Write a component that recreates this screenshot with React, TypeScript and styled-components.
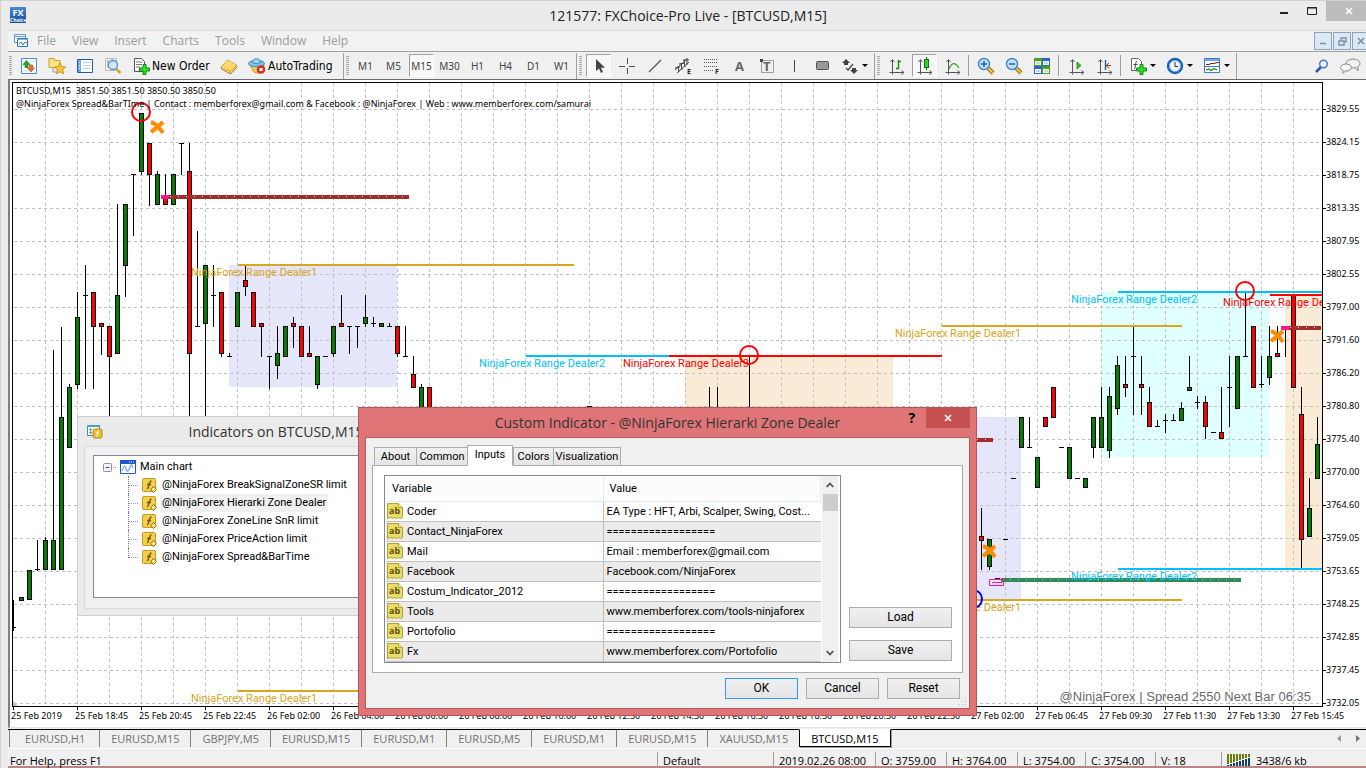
import React from "react";
import styled, { createGlobalStyle, css } from "styled-components";

const ui = `"Open Sans", "Noto Sans", sans-serif`;
const small = `"Noto Sans", "Open Sans", sans-serif`;
const dialogFont = `Roboto, "Open Sans", sans-serif`;

const Global = createGlobalStyle`
  * { box-sizing: border-box; }
  body { margin: 0; background: #ebebeb; color: #000; font: 11px ${ui}; }
  button { font: inherit; color: inherit; padding: 0; margin: 0; border: 0; background: none; }
  svg { display: block; flex: none; }
`;

/* ---------- terminal frame ---------- */
const Desktop = styled.div`
  position: relative;
  min-height: 100vh;
  display: flex;
  flex-direction: column;
  overflow: hidden;
  border-top: 1px solid #d2d2d2;
  border-left: 1px solid #d2d2d2;
`;
const TitleBar = styled.header`
  display: flex;
  height: 29px;
  padding-left: 9px;
  justify-content: space-between;
`;
const AppTitle = styled.h1`
  margin: 0;
  font: 14px/30px ${ui};
  color: #222;
`;
const AppLogo = styled.span`
  width: 16px;
  height: 16px;
  margin-top: 6px;
  background: linear-gradient(#4a8ad4, #0d4a9c);
  color: #fff;
  font: bold 9px/11px ${ui};
  text-align: center;
  small { display: block; font-size: 5px; line-height: 4px; }
`;
const TitleSide = styled.div<{ $end?: boolean }>`
  flex: 1;
  display: flex;
  justify-content: ${p => (p.$end ? "flex-end" : "flex-start")};
  align-items: flex-start;
`;
const CaptionButton = styled.button<{ $close?: boolean }>`
  width: ${p => (p.$close ? 45 : 28)}px;
  height: 20px;
  margin-right: ${p => (p.$close ? -5 : 0)}px;
  background: ${p => (p.$close ? "#bcbcbc" : "none")};
  display: grid;
  place-items: center;
`;
const Frame = styled.main`
  flex: 1;
  margin-left: 7px;
  display: flex;
  flex-direction: column;
  border-top: 1px solid #dadada;
  background: #f0f0f0;
`;
const MenuBar = styled.nav`
  display: flex;
  align-items: center;
  height: 20px;
  padding-left: 5px;
  background: #f2f2f2;
  color: #9b9b9b;
  font: 12px ${ui};
`;
const MenuItem = styled.button`
  padding: 0 8px;
  line-height: 20px;
`;
const MdiButtons = styled.div`
  display: flex;
  gap: 1px;
  margin-left: auto;
  margin-right: -4px;
`;
const MdiButton = styled.button`
  width: 18px;
  height: 18px;
  border: 1px solid #8fa3b8;
  background: #dce8f5;
  display: grid;
  place-items: center;
`;

/* ---------- tool bar ---------- */
const ToolBar = styled.div`
  display: flex;
  align-items: center;
  height: 28px;
  padding: 0 3px 0 1px;
  border-top: 1px solid #a0a0a0;
  background: #f0f0f0;
`;
const Grip = styled.span`
  width: 3px;
  height: 20px;
  margin-right: 2px;
  background: repeating-linear-gradient(#a8a8a8 0 1px, #f0f0f0 1px 2px);
`;
const Divider = styled.span<{ $l?: number; $r?: number }>`
  width: 1px;
  height: ${p => (p.$l === undefined ? 26 : 21)}px;
  margin: 0 ${p => p.$r ?? 2}px 0 ${p => p.$l ?? 1}px;
  background: #a0a0a0;
`;
const Tool = styled.button<{ $pressed?: boolean; $drop?: boolean }>`
  width: ${p => (p.$drop ? 34 : 25)}px;
  height: 23px;
  margin: 0 1px 0 2px;
  padding-left: ${p => (p.$drop ? 3 : 0)}px;
  display: flex;
  align-items: center;
  justify-content: ${p => (p.$drop ? "flex-start" : "center")};
  gap: 3px;
  font: 10px ${small};
  color: #444;
  ${p =>
    p.$pressed &&
    css`
      border: 1px solid;
      border-color: #a0a0a0 #fff #fff #a0a0a0;
      background: #f8f8f8;
    `}
`;
const TextTool = styled.button<{ $w: number }>`
  width: ${p => p.$w}px;
  height: 23px;
  padding-left: 6px;
  display: flex;
  align-items: center;
  gap: 2px;
  font: 12px "DejaVu Sans Condensed", "DejaVu Sans", sans-serif;
`;
const Caret = styled.span`
  border: 3px solid transparent;
  border-top-color: #000;
  border-bottom: 0;
`;
const Spacer = styled.span`
  flex: 1;
`;

/* ---------- chart ---------- */
const Workspace = styled.section`
  flex: 1;
  display: flex;
  flex-direction: column;
  padding: 2px 0 0 2px;
  border-top: 1px solid #696969;
  border-left: 2px solid #808080;
  border-bottom: 1px solid #e3e3e3;
  background: #fff;
`;
const ChartRow = styled.div`
  display: flex;
`;
const Plot = styled.div`
  flex: 1;
  min-width: 0;
  border: 1px solid #000;
`;
const PriceAxis = styled.ol`
  width: 43px;
  margin: 0;
  padding: 22px 0 0;
  list-style: none;
  font: 9px/10px ${small};
`;
const Price = styled.li`
  height: 33px;
  display: flex;
  align-items: flex-start;
  &:last-child { height: 9px; }
  &::before {
    content: "";
    width: 3px;
    height: 1px;
    margin-top: 5px;
    background: #000;
  }
`;
const DateAxis = styled.ol`
  margin: 0 0 0 -1px;
  padding: 0 0 5px;
  list-style: none;
  display: flex;
  font: 9px/12px ${small};
  white-space: nowrap;
  overflow: hidden;
`;
const DateMark = styled.li`
  flex: 0 0 64px;
  &::before {
    content: "";
    display: block;
    width: 1px;
    height: 3px;
    margin-left: 2px;
    background: #000;
  }
`;
const ChartTabs = styled.nav`
  display: flex;
  align-items: flex-start;
  height: 20px;
  padding-left: 1px;
  border-top: 1px solid #000;
  border-bottom: 1px solid #fff;
  margin-top: 1px;
`;
const ChartTab = styled.button<{ $active?: boolean }>`
  height: 17px;
  padding: 0 11px;
  border-left: 1px solid #808080;
  line-height: 17px;
  color: #707070;
  &:first-child { padding-left: 15px; padding-right: 14px; }
  ${p =>
    p.$active &&
    css`
      height: 18px;
      margin-top: -1px;
      background: #fff;
      color: #000;
      border: 1px solid #000;
      border-top-color: #fff;
      box-shadow: 1px 1px #a0a0a0;
    `}
`;
const TabScroll = styled.span`
  display: flex;
  gap: 15px;
  margin: 5px 6px 0 auto;
`;
const StatusBar = styled.footer`
  display: flex;
  height: 19px;
  padding: 3px 0 0 2px;
  border-bottom: 2px solid #b98686;
  font: 11px/17px ${ui};
  white-space: nowrap;
`;
const StatusCell = styled.span<{ $w?: number }>`
  flex: ${p => (p.$w ? `0 0 ${p.$w}px` : "1")};
  height: 14px;
  display: flex;
  gap: 5px;
  padding-left: ${p => (p.$w ? 5 : 0)}px;
  border-left: ${p => (p.$w ? "1px solid #a0a0a0" : "0")};
  svg { margin-top: 2px; }
`;

/* ---------- floating windows ---------- */
const ListWindow = styled.section`
  position: absolute;
  left: 76px;
  top: 415px;
  width: 404px;
  padding: 0 6px 6px;
  border: 1px solid #cfcfcf;
  background: #ebebeb;
`;
const WindowTitle = styled.h2`
  margin: 0;
  font: 14px/30px ${ui};
  color: #333;
  text-align: center;
`;
const ListCaption = styled.div`
  display: grid;
  grid-template-columns: 18px 1fr 26px;
  align-items: center;
  height: 29px;
  padding-left: 2px;
`;
const ListClient = styled.div`
  padding: 8px 8px 10px;
  border: 1px solid #dadada;
  background: #f0f0f0;
`;
const Tree = styled.div`
  height: 143px;
  padding: 2px 0 0 9px;
  border: 1px solid #828790;
  background: #fff;
  font: 11px/18px ${dialogFont};
`;
const TreeRoot = styled.div`
  display: flex;
  align-items: center;
  height: 18px;
  gap: 4px;
`;
const TreeList = styled.ul`
  margin: 0 0 0 25px;
  padding: 0;
  list-style: none;
`;
const TreeItem = styled.li<{ $selected?: boolean }>`
  display: flex;
  align-items: center;
  height: 18px;
  gap: 3px;
  &::before {
    content: "";
    width: 10px;
    height: 18px;
    border-left: 1px dotted #808080;
    background: repeating-linear-gradient(90deg, #999 0 1px, #fff 1px 2px) 0 9px / 100% 1px no-repeat;
  }
  &:last-child::before { height: 10px; align-self: flex-start; }
  span {
    padding: 0 2px;
    background: ${p => (p.$selected ? "#f0f0f0" : "none")};
  }
`;

const Dialog = styled.section`
  position: absolute;
  left: 357px;
  top: 406px;
  width: 619px;
  padding: 0 6px 6px;
  border: 1px solid #b35659;
  background: #df7577;
  font: 11px ${dialogFont};
`;
const DialogCaption = styled.div`
  display: grid;
  grid-template-columns: 72px 1fr 72px;
  height: 29px;
`;
const CaptionTools = styled.div`
  display: flex;
  justify-content: flex-end;
  align-items: flex-start;
`;
const HelpButton = styled.button`
  width: 28px;
  font: bold 14px/20px ${ui};
`;
const CloseButton = styled.button`
  width: 45px;
  height: 20px;
  background: #c75050;
  display: grid;
  place-items: center;
`;
const DialogClient = styled.div`
  padding: 7px 6px 9px;
  border: 1px solid #b85a5c;
  background: #f0f0f0;
`;
const TabStrip = styled.div`
  display: flex;
  align-items: flex-end;
  padding-left: 2px;
  margin-bottom: -1px;
`;
const DialogTab = styled.button<{ $active?: boolean; $w: number }>`
  width: ${p => p.$w}px;
  height: ${p => (p.$active ? 21 : 19)}px;
  margin-right: ${p => (p.$active ? 0 : -1)}px;
  border: 1px solid #acacac;
  background: linear-gradient(#f0f0f0, #e5e5e5);
  ${p =>
    p.$active &&
    css`
      position: relative;
      background: #fff;
      border-bottom-color: #fff;
      padding-bottom: 2px;
    `}
`;
const TabPage = styled.div`
  display: flex;
  gap: 8px;
  padding: 9px 10px 9px 11px;
  border: 1px solid #acacac;
  background: #fff;
`;
const GridBox = styled.div`
  flex: 1;
  display: flex;
  padding: 0 2px 0 1px;
  border: 1px solid #828790;
`;
const InputsTable = styled.table`
  flex: 1;
  border-collapse: collapse;
  table-layout: fixed;
  th {
    height: 25px;
    padding: 0 6px;
    text-align: left;
    font-weight: normal;
    background: #fcfcfc;
    border-right: 1px solid #e0edfa;
    border-bottom: 1px solid #e0edfa;
  }
  td {
    height: 20px;
    padding: 0 3px;
    border-right: 1px solid #c0c0c0;
    border-bottom: 1px solid #c0c0c0;
    white-space: nowrap;
  }
  td:last-child { border-right: 0; }
  tr:nth-child(even) td { background: #ebebeb; }
`;
const NameCell = styled.span`
  display: flex;
  align-items: center;
  gap: 4px;
  margin-left: -2px;
`;
const ScrollBar = styled.div`
  width: 16px;
  display: flex;
  flex-direction: column;
  align-items: center;
  margin-left: 1px;
  background: #f0f0f0;
`;
const ScrollButton = styled.button`
  width: 15px;
  height: 18px;
  display: grid;
  place-items: center;
`;
const Thumb = styled.span`
  width: 15px;
  height: 17px;
  margin-bottom: auto;
  background: #cdcdcd;
`;
const SideButtons = styled.div`
  width: 103px;
  display: flex;
  flex-direction: column;
  justify-content: flex-end;
  gap: 12px;
  padding-bottom: 2px;
`;
const PushButton = styled.button<{ $default?: boolean }>`
  height: 21px;
  border: 1px solid ${p => (p.$default ? "#3399ff" : "#acacac")};
  background: linear-gradient(#f0f0f0, #e5e5e5);
  font-size: 12px;
`;
const DialogFooter = styled.div`
  display: flex;
  justify-content: flex-end;
  gap: 8px;
  padding: 5px 3px 0 0;
  ${PushButton} { width: 73px; }
`;
const SizeGrip = styled.span`
  position: absolute;
  right: 9px;
  bottom: 9px;
  width: 9px;
  height: 9px;
  background: radial-gradient(#bbb 1px, transparent 1px) 0 0 / 3px 3px;
  clip-path: polygon(100% 0, 100% 100%, 0 100%);
`;

/* ---------- icons ---------- */
const Ico = ({ children, w = 18, h = 18 }: { children: React.ReactNode; w?: number; h?: number }) => (
  <svg width={w} height={h} viewBox={`0 0 ${w} ${h}`} aria-hidden="true">{children}</svg>
);
const Plus = () => <path d="M8.500 11h3.500v-3.500h3v3.500h3.500v3h-3.500v3.500h-3v-3.500h-3.500z" transform="translate(-1 0)" fill="#2fe02f" stroke="#0a8a0a" />;
const MenuIcon = () => (
  <Ico w={16} h={16}>
    <path d="M1.500 1.500h11v8h-11zM1.500 3.500h11" fill="#fff" stroke="#5b9bdc" />
    <path d="M4.500 5.500h10v8h-10z" fill="#fff" stroke="#2f6fc4" /><path d="M4.500 6.500h10" stroke="#7db3ea" />
    <path d="M6 11l2-2 2 3 2-3 2 1" fill="none" stroke="#3a78c8" />
  </Ico>
);
const MarketIcon = () => (
  <Ico><path d="M1.500 1.500h15v15h-15z" fill="#f6fbff" stroke="#4a90d9" />
    <path d="M3 5h2M11 4.500h4M3 8h1M3 14h5" stroke="#cdd9e6" />
    <path d="M6.500 3.500l3.500 4h-2v3h-3v-3h-2z" fill="#22b022" stroke="#0c7a0c" strokeWidth=".6" />
    <path d="M11 15l3.500-4h-2v-3h-3v3h-2z" fill="#f07030" stroke="#b03c10" strokeWidth=".6" /></Ico>
);
const FavIcon = () => (
  <Ico w={20}><path d="M2 1.500h5l1 2h5v7h-11z" fill="#fbe38a" stroke="#c9a227" /><path d="M6 11v4h3" fill="none" stroke="#999" />
    <path d="M13 6l1.700 3.600 4 .5-3 2.700.8 4-3.500-2-3.500 2 .8-4-3-2.700 4-.5z" fill="#f7c93a" stroke="#b8860b" strokeWidth=".8" /></Ico>
);
const NavIcon = () => (
  <Ico><path d="M1.500 2.500h15v13h-15z" fill="#fff" stroke="#1e5cae" /><path d="M2 3h3v12h-3z" fill="#6fa8e6" />
    <path d="M7 5.500h8M7 8.500h8M7 11.500h8" stroke="#b8d0ea" /><path d="M3 5.500h1M3 8.500h1M3 11.500h1" stroke="#fff" /></Ico>
);
const TesterIcon = () => (
  <Ico><path d="M1.500 1.500h11v12h-11z" fill="#f4f6f8" stroke="#b5bcc4" /><path d="M4 3v8M8 2v6M11 3v4" stroke="#77879a" />
    <circle cx="9" cy="8" r="4.500" fill="#cfe5f7" fillOpacity=".85" stroke="#5f92c4" strokeWidth="1.300" /><path d="M12.500 12l4 4" stroke="#d9a520" strokeWidth="2.500" /></Ico>
);
const OrderIcon = () => (
  <Ico><path d="M2.500 1.500h7l3 3v10h-10z" fill="#fff" stroke="#555" /><path d="M4 5h6M4 7.500h6M4 10h4" stroke="#777" /><Plus /></Ico>
);
const GoldIcon = () => (
  <Ico><path d="M1.500 10l6-7 9 5v3l-6 6-9-5z" fill="#d9981c" stroke="#a36f0c" strokeWidth=".8" /><path d="M1.500 10l6-7 9 5-6 6z" fill="#ffd968" /><path d="M2 11l8.500 4.500 6-6" fill="none" stroke="#ffe9a8" /></Ico>
);
const AutoIcon = () => (
  <Ico><path d="M2 8l4 7c4 2 7 1 9-1l1-6z" fill="#f6cf54" stroke="#c09020" /><ellipse cx="8.500" cy="6.500" rx="8" ry="3.200" fill="#7cc3ea" stroke="#3a86bb" />
    <path d="M4.500 5.500c0-5 8-5 8 0-2 1.500-6 1.500-8 0z" fill="#9fd6f4" stroke="#3a86bb" /><circle cx="13" cy="12.500" r="4.300" fill="#dd2f20" /><path d="M11.500 11h3v3h-3z" fill="#fff" /></Ico>
);
const CursorIcon = () => <Ico><path d="M6 2v12l3-2.500 2 4.500 2-1-2-4.300h4z" fill="#444" /></Ico>;
const CrossIcon = () => <Ico><path d="M9.500 1v6M9.500 11v6M1 9.500h6M11 9.500h6" stroke="#505050" /></Ico>;
const LineIcon = () => <Ico><path d="M3 15L15 3" stroke="#555" strokeWidth="1.300" /></Ico>;
const Letter = styled.text`
  font: bold 7px ${ui};
  fill: #222;
`;
const BigLetter = styled.text`
  font: bold 13px ${ui};
  fill: #666;
`;
const ChannelIcon = () => (
  <Ico><path d="M1 13L13 2M3 16L15 5M4 9l1 6M7 6l1 7M10 3l1 7M13 1v7M1 11l5-1M5 7l6-1M9 3l6 0" stroke="#444" fill="none" /><Letter x="13" y="17">E</Letter></Ico>
);
const FiboIcon = () => (
  <Ico><path d="M2 2.500h14M2 5.500h14M2 9.500h14M2 13.500h9" stroke="#555" strokeDasharray="1 1" /><Letter x="13" y="17">F</Letter></Ico>
);
const TextIcon = () => <Ico><BigLetter x="5" y="14">A</BigLetter></Ico>;
const LabelIcon = () => (
  <Ico><path d="M3.500 3.500h12v12h-12z" fill="none" stroke="#555" strokeDasharray="1 1" /><path d="M2 2h3v3h-3z" fill="#444" /><BigLetter x="5" y="14">T</BigLetter></Ico>
);
const VLineIcon = () => <Ico><path d="M8.500 3v12" stroke="#444" /></Ico>;
const RectIcon = () => <Ico><rect x="2.500" y="4.500" width="12" height="8" rx="1" fill="#999" stroke="#555" /></Ico>;
const ArrowsIcon = () => (
  <Ico><path d="M1 6l4-4 4 4h-2v2h-4v-2zM9 13h2v-2h4v2h2l-4 4z" fill="#444" /><path d="M5 11l2 2 5-6" fill="none" stroke="#444" strokeWidth="1.200" /></Ico>
);
const Axes = () => <path d="M4.500 3v12.500h11M2.500 5l2-2.500 2 2.500M13.500 13.500l2.500 2-2.500 2M1.500 15.500h3v2" fill="none" stroke="#555" />;
const BarsIcon = () => <Ico><Axes /><path d="M10.500 3v9M8 11.500h2.500M10.500 4.500h2.500" stroke="#109010" strokeWidth="1.500" /></Ico>;
const CandleIcon = () => <Ico><Axes /><path d="M10.500 0v13" stroke="#0a7a0a" /><rect x="8.500" y="2.500" width="4" height="8" fill="#32d032" stroke="#0a7a0a" /></Ico>;
const CurveIcon = () => <Ico><Axes /><path d="M5 12c3-7 6-7 10-1" fill="none" stroke="#2ba52b" strokeWidth="1.300" /></Ico>;
const Lens = ({ plus }: { plus?: boolean }) => (
  <Ico><path d="M11 11l5 5" stroke="#8c6408" strokeWidth="4" /><path d="M11 11l5 5" stroke="#f5c73c" strokeWidth="2.200" />
    <circle cx="7" cy="7" r="5.500" fill="#bfe0fa" stroke="#3c86cf" strokeWidth="1.400" /><path d={plus ? "M4 7h6M7 4v6" : "M4 7h6"} stroke="#20659f" strokeWidth="1.500" /></Ico>
);
const TileIcon = () => (
  <Ico>{[[1, 1, "#46a31e"], [9, 1, "#2a62cf"], [1, 9, "#2a62cf"], [9, 9, "#46a31e"]].map(([x, y, c], i) => (
    <g key={i}><rect x={x} y={y} width="8" height="8" fill={c as string} /><rect x={+x + 1} y={+y + 3} width="6" height="4" fill="#fff" /><path d={`M${+x + 2} ${+y + 5}h4`} stroke="#9ab" /></g>
  ))}</Ico>
);
const ScrollIcon = () => <Ico><Axes /><path d="M9 5l4 3.500-4 3.500z" fill="#42c042" stroke="#128012" strokeWidth=".8" /></Ico>;
const ShiftIcon = () => <Ico><Axes /><path d="M9.500 3v10" stroke="#20609f" strokeWidth="1.400" /><path d="M10 8.500h5M13 6l-3 2.500 3 2.500" stroke="#b33a12" fill="none" /></Ico>;
const IndicatorIcon = () => (
  <Ico><path d="M2.500 1.500h7l3 3v9h-10z" fill="#fff" stroke="#666" /><path d="M8 4c-2 0-1 8-3 8M4.500 7.500h4" stroke="#444" fill="none" /><Plus /></Ico>
);
const ClockIcon = () => (
  <Ico><circle cx="9" cy="9" r="7" fill="#f4f8fc" stroke="#1c62bf" strokeWidth="2.400" /><path d="M9 5v4.500h3" stroke="#333" fill="none" /><circle cx="9" cy="9" r="5.500" fill="none" stroke="#6fa4e0" strokeWidth="1" /></Ico>
);
const TemplateIcon = () => (
  <Ico><path d="M1.500 1.500h15v14h-15z" fill="#fff" stroke="#3d7cc4" /><path d="M2 3h14" stroke="#6fa8e6" strokeWidth="2" />
    <path d="M2 9.500h14" stroke="#3d7cc4" /><path d="M3 7.500h3l2-1h3l3-1h2" stroke="#8c1a10" fill="none" strokeWidth="1.200" /><path d="M3 13l3-1 2 1.500 3-2 3 1.500" stroke="#1a8c1a" fill="none" strokeWidth="1.200" /></Ico>
);
const SearchIcon = () => <Ico><path d="M3 15l5-5" stroke="#2b52c4" strokeWidth="2.500" /><circle cx="10.500" cy="7" r="3.800" fill="#f4f8ff" stroke="#4a74d8" strokeWidth="1.500" /></Ico>;
const ChatIcon = () => (
  <Ico w={22}><ellipse cx="14" cy="6.500" rx="7" ry="4.500" fill="#f2f2f2" stroke="#8a8a8a" /><path d="M16 10l3 4v-4" fill="#f2f2f2" stroke="#8a8a8a" />
    <ellipse cx="7" cy="10.500" rx="5.500" ry="3.500" fill="#fafafa" stroke="#8a8a8a" /><path d="M4 13v3.500l3-3" fill="#fafafa" stroke="#8a8a8a" /></Ico>
);
const Cross = ({ color = "#fff" }: { color?: string }) => <Ico w={8} h={8}><path d="M1 1l6 6M7 1l-6 6" stroke={color} strokeWidth="1.600" /></Ico>;
const ListIcon = () => (
  <Ico w={17} h={16}><path d="M1.500 1.500h12v10h-12z" fill="#fff" stroke="#3d8fb5" /><path d="M1 2h13" stroke="#4aa3c8" strokeWidth="2" /><path d="M3 5.500h3M3 8.500h3M4.500 4v6" stroke="#6f9cb5" />
    <rect x="7" y="5" width="9" height="9" rx="1.500" fill="#eabf30" stroke="#b88a10" /><path d="M13 6.500c-2-.5-1 6-3 6M10 9h3" stroke="#fff" fill="none" /></Ico>
);
const FxIcon = () => (
  <Ico w={15} h={15}><rect x=".5" y=".5" width="13" height="13" rx="1.500" fill="#f3cf4c" stroke="#c79a1e" /><path d="M9.500 3c-3-.5-2 8-4.500 7.500M5 6.500h4" stroke="#6e5204" strokeWidth="1.300" fill="none" />
    <path d="M11.500 8.500l3 3-3 3-3-3z" fill="#ffe27a" stroke="#8f6b08" /></Ico>
);
const ChartIcon = () => (
  <Ico w={16} h={14}><path d="M.5.500h15v13h-15z" fill="#fff" stroke="#1e56c8" /><path d="M0 2h16" stroke="#1e56c8" strokeWidth="4" /><path d="M9 2h1M11 2h1M13 2h1" stroke="#fff" />
    <path d="M2 11c2-6 3-6 4-2s3 2 4-2 2-2 3 1" fill="none" stroke="#7aa5e6" strokeWidth="1.200" /></Ico>
);
const ExpandIcon = () => <Ico w={13} h={9}><rect x=".5" y=".5" width="8" height="8" rx="1" fill="#f4f4f4" stroke="#919191" /><path d="M2.500 4.500h4" stroke="#3355aa" /><path d="M10 4.500h3" stroke="#999" strokeDasharray="1 1" /></Ico>;
const AbLetters = styled.text`
  font: bold 9px ${ui};
  fill: #5c5208;
`;
const AbIcon = () => (
  <Ico w={16} h={16}><path d="M.5.500h11l4 4v10l-2 1-2-1-2 1-2-1-2 1-2-1-3 1z" fill="#e8db68" stroke="#b3a233" /><path d="M11.500.500v4h4" fill="#f7f0a8" stroke="#b3a233" /><AbLetters x="2" y="11">ab</AbLetters></Ico>
);
const TrafficIcon = () => (
  <Ico w={24} h={12}>{[0, 1, 2, 3, 4, 5, 6, 7].map(i => (
    <g key={i}><rect x={i * 3} y="0" width="2" height={10 - i} fill="#6b7a10" /><rect x={i * 3} y={11 - i} width="2" height={1 + i} fill="#123f66" /></g>
  ))}</Ico>
);

/* ---------- chart data: x, high, body top, body bottom, low, direction ---------- */
type Candle = [number, number, number, number, number, "g" | "r" | "d"];
const candles: Candle[] = [
  [13, 600, 627, 627, 630, "d"], [21, 597, 597, 600, 600, "g"], [29, 570, 570, 599, 599, "g"], [37, 540, 569, 569, 570, "d"],
  [45, 537, 540, 569, 569, "g"], [53, 350, 540, 569, 569, "g"], [61, 327, 417, 569, 569, "g"], [69, 384, 387, 447, 447, "g"],
  [77, 292, 317, 384, 388, "g"], [85, 265, 295, 295, 388, "d"], [93, 292, 292, 326, 388, "r"], [101, 323, 323, 326, 354, "r"],
  [109, 326, 326, 356, 430, "r"], [117, 204, 295, 353, 353, "g"], [125, 204, 204, 265, 296, "g"], [133, 174, 174, 174, 235, "d"],
  [141, 113, 113, 171, 174, "g"], [149, 143, 143, 174, 205, "r"], [157, 171, 174, 204, 204, "g"], [165, 174, 196, 204, 204, "r"],
  [173, 174, 174, 204, 204, "g"], [181, 143, 143, 143, 174, "d"], [189, 143, 171, 353, 430, "r"], [197, 231, 326, 326, 326, "d"],
  [205, 265, 265, 323, 430, "g"], [213, 265, 295, 295, 326, "d"], [221, 292, 292, 353, 356, "r"], [229, 353, 356, 356, 356, "d"],
  [237, 292, 292, 326, 326, "g"], [245, 266, 280, 286, 295, "r"], [253, 292, 292, 326, 326, "r"], [261, 323, 323, 326, 356, "r"],
  [269, 356, 356, 356, 388, "d"], [277, 326, 353, 365, 378, "g"], [285, 326, 326, 356, 356, "g"], [293, 317, 323, 326, 347, "r"],
  [301, 326, 326, 356, 356, "r"], [309, 326, 353, 356, 356, "r"], [317, 356, 356, 384, 388, "g"], [325, 356, 356, 356, 356, "d"],
  [333, 326, 326, 353, 356, "g"], [341, 295, 323, 326, 326, "r"], [349, 326, 326, 326, 353, "d"], [357, 326, 326, 326, 347, "d"],
  [365, 295, 317, 323, 326, "g"], [373, 317, 323, 323, 326, "d"], [381, 323, 323, 326, 326, "g"], [389, 323, 326, 326, 326, "d"],
  [397, 326, 326, 353, 356, "r"], [405, 326, 356, 356, 356, "d"], [413, 356, 374, 387, 387, "r"], [421, 384, 387, 430, 430, "g"],
  [429, 387, 387, 430, 430, "r"], [589, 406, 406, 430, 430, "r"], [709, 387, 430, 430, 430, "d"], [717, 387, 430, 430, 430, "d"],
  [749, 357, 430, 430, 430, "d"], [981, 508, 536, 540, 569, "r"], [989, 539, 539, 566, 569, "g"], [997, 578, 578, 578, 578, "d"],
  [1005, 539, 539, 539, 539, "d"], [1013, 478, 478, 478, 478, "d"], [1021, 417, 417, 447, 447, "g"], [1029, 417, 447, 447, 447, "d"],
  [1037, 457, 457, 487, 487, "g"], [1045, 417, 417, 426, 426, "r"], [1053, 387, 387, 417, 417, "r"], [1061, 447, 447, 447, 447, "d"],
  [1069, 447, 447, 478, 478, "g"], [1077, 478, 478, 478, 478, "d"], [1085, 478, 478, 487, 487, "g"], [1093, 417, 417, 447, 457, "g"],
  [1101, 387, 417, 447, 447, "g"], [1109, 387, 396, 450, 457, "g"], [1117, 356, 365, 408, 414, "g"], [1125, 356, 384, 387, 396, "r"],
  [1133, 326, 356, 356, 414, "d"], [1141, 356, 384, 387, 414, "r"], [1149, 387, 402, 426, 426, "r"], [1157, 420, 426, 426, 426, "d"],
  [1165, 414, 420, 420, 432, "d"], [1173, 414, 420, 420, 420, "d"], [1181, 402, 408, 420, 420, "g"], [1189, 356, 387, 390, 390, "g"],
  [1197, 396, 402, 402, 408, "d"], [1205, 396, 402, 426, 438, "r"], [1213, 432, 432, 432, 432, "d"], [1221, 387, 432, 438, 438, "r"],
  [1229, 356, 387, 387, 426, "d"], [1237, 356, 356, 408, 408, "g"], [1245, 293, 356, 356, 356, "d"], [1253, 326, 326, 387, 387, "r"],
  [1261, 356, 384, 384, 387, "d"], [1269, 326, 356, 377, 384, "g"], [1277, 326, 353, 356, 356, "r"], [1285, 328, 328, 328, 356, "d"],
  [1293, 295, 295, 387, 387, "r"], [1301, 387, 414, 539, 568, "r"], [1309, 478, 508, 536, 536, "g"], [1317, 417, 444, 478, 478, "g"],
];
/* x, y, width, height, fill */
const zones: [number, number, number, number, string][] = [
  [229, 265, 168, 122, "#e6e6fa"], [685, 357, 208, 90, "#faebd7"], [970, 417, 51, 182, "#e6e6fa"],
  [1101, 292, 168, 165, "#e0ffff"], [1285, 295, 37, 274, "#faebd7"],
];
const GOLD = "#daa520", SKY = "#00bfff", RED = "#ff0000", BROWN = "#a52a2a";
/* x1, x2, y, colour, label number, label x */
const levels: [number, number, number, string, number, number][] = [
  [238, 574, 265, GOLD, 1, 191], [942, 1182, 326, GOLD, 1, 895], [526, 669, 356, SKY, 2, 479], [669, 942, 356, RED, 3, 623],
  [1118, 1323, 292, SKY, 2, 1071], [1270, 1323, 295, RED, 3, 1223], [1118, 1323, 569, SKY, 2, 1071], [942, 1182, 600, GOLD, 1, 895],
  [238, 574, 691, GOLD, 1, 191],
];
const bands: [number, number, number, string][] = [
  [161, 409, 197, BROWN], [960, 993, 440, BROWN], [1281, 1321, 328, BROWN], [1001, 1241, 580, "#2e8b57"],
];
const rings: [number, number, string][] = [[141, 112, RED], [749, 355, RED], [1245, 291, RED], [973, 599, "#0000ff"]];
const crosses: [number, number][] = [[157, 127], [1277, 336], [989, 551]];

const ChartSvg = styled.svg`
  width: 100%;
  height: 623px;
  text { white-space: pre; }
`;
const LevelText = styled.text`
  font: 11px ${dialogFont};
`;
const InfoText = styled.text`
  font: 9px ${small};
`;
const SpreadText = styled.text`
  font: 13px "Liberation Sans", sans-serif;
  fill: #696969;
`;

const Chart = () => (
  <ChartSvg role="img" aria-label="BTCUSD M15 candlestick chart">
    <g transform="translate(-13 -83)">
      {zones.map(([x, y, w, h, c]) => <rect key={x} x={x} y={y} width={w} height={h} fill={c} />)}
      <g stroke="#c0c0c0" strokeDasharray="3 3">
        {Array.from({ length: 80 }, (_, i) => <path key={i} d={`M${45.5 + 32 * i} 83V706`} />)}
        {Array.from({ length: 19 }, (_, i) => <path key={i} d={`M14 ${109.5 + 33 * i}H3000`} />)}
      </g>
      {candles.map(([x, hi, t, b, lo, k]) => (
        <g key={x} stroke="#000">
          <path d={`M${x + 0.5} ${hi}V${lo + 1}`} />
          {k === "d" ? <path d={`M${x - 2} ${t + 0.5}h5`} /> : (
            <rect x={x - 1.5} y={t + 0.5} width="4" height={Math.max(b - t, 2)} fill={k === "g" ? "#008000" : RED} />
          )}
        </g>
      ))}
      {bands.map(([a, b, y, c]) => (
        <g key={a}>
          <path d={`M${a} ${y}H${b}`} stroke={c} strokeWidth="4" />
          <path d={`M${a + 1} ${y - 0.5}H${b}`} stroke="#fff" strokeDasharray="1 7" />
        </g>
      ))}
      <path d="M161 197h8M1281 328h8" stroke="#ff1493" strokeWidth="4" />
      <path d="M989.500 579.500h14v6h-14zM992 582.500h10" fill="none" stroke="#ff1493" />
      {levels.map(([a, b, y, c, n, lx], i) => (
        <g key={i}>
          <path d={`M${a} ${y}H${b}`} stroke={c} strokeWidth="2" />
          <LevelText x={lx} y={y + 11} fill={c}>NinjaForex Range Dealer{n}</LevelText>
        </g>
      ))}
      {rings.map(([x, y, c]) => <circle key={x} cx={x} cy={y} r="9" fill="none" stroke={c} strokeWidth="2" />)}
      {crosses.map(([x, y]) => (
        <path key={x} d={`M${x - 6} ${y - 5}q6 2 12 11M${x + 6} ${y - 5}q-5 5 -12 10`} stroke="#ff8c00" strokeWidth="4" fill="none" />
      ))}
      <path d="M13 701l5 5h-5z" fill="#c0c0c0" />
      <InfoText x="16" y="94">BTCUSD,M15  3851.50 3851.50 3850.50 3850.50</InfoText>
      <InfoText x="16" y="107">@NinjaForex Spread&amp;BarTIme | Contact : memberforex@gmail.com &amp; Facebook : @NinjaForex | Web : www.memberforex.com/samurai</InfoText>
      <SpreadText x="1311" y="701" textAnchor="end">@NinjaForex | Spread 2550 Next Bar 06:35</SpreadText>
    </g>
  </ChartSvg>
);

const prices = ["3829.55", "3824.15", "3818.75", "3813.35", "3807.95", "3802.55", "3797.00", "3791.60", "3786.20", "3780.80", "3775.40", "3770.00", "3764.60", "3759.05", "3753.65", "3748.25", "3742.85", "3737.45", "3732.05"];
const dates = ["25 Feb 2019", "25 Feb 18:45", "25 Feb 20:45", "25 Feb 22:45", "26 Feb 02:00", "26 Feb 04:00", "26 Feb 06:00", "26 Feb 08:00", "26 Feb 10:00", "26 Feb 12:30", "26 Feb 14:30", "26 Feb 16:30", "26 Feb 18:30", "26 Feb 20:30", "26 Feb 22:30", "27 Feb 02:00", "27 Feb 06:45", "27 Feb 09:30", "27 Feb 11:30", "27 Feb 13:30", "27 Feb 15:45"];
const chartTabs = ["EURUSD,H1", "EURUSD,M15", "GBPJPY,M5", "EURUSD,M15", "EURUSD,M1", "EURUSD,M5", "EURUSD,M1", "EURUSD,M15", "XAUUSD,M15", "BTCUSD,M15"];
const status: [number, string][] = [[116, "Default"], [102, "2019.02.26 08:00"], [71, "O: 3759.00"], [71, "H: 3764.00"], [68, "L: 3754.00"], [70, "C: 3754.00"], [66, "V: 18"]];
const indicators = ["BreakSignalZoneSR limit", "Hierarki Zone Dealer", "ZoneLine SnR limit", "PriceAction limit", "Spread&BarTime"];
const rule = "==================";
const inputs = [
  ["Coder", "EA Type : HFT, Arbi, Scalper, Swing, Cost..."], ["Contact_NinjaForex", rule], ["Mail", "Email : memberforex@gmail.com"],
  ["Facebook", "Facebook.com/NinjaForex"], ["Costum_Indicator_2012", rule], ["Tools", "www.memberforex.com/tools-ninjaforex"],
  ["Portofolio", rule], ["Fx", "www.memberforex.com/Portofolio"],
];
const dialogTabs: [string, number][] = [["About", 43], ["Common", 52], ["Inputs", 46], ["Colors", 41], ["Visualization", 68]];

export default function App() {
  return (
    <>
      <Global />
      <Desktop>
        <TitleBar>
          <TitleSide><AppLogo>FX<small>Choice</small></AppLogo></TitleSide>
          <AppTitle>121577: FXChoice-Pro Live - [BTCUSD,M15]</AppTitle>
          <TitleSide $end>
            <CaptionButton aria-label="Minimize"><Ico w={8} h={8}><path d="M0 6h8" stroke="#222" strokeWidth="2" /></Ico></CaptionButton>
            <CaptionButton aria-label="Maximize"><Ico w={10} h={8}><path d="M.5.500h9v7h-9zM0 1h10" fill="none" stroke="#222" /></Ico></CaptionButton>
            <CaptionButton $close aria-label="Close"><Cross /></CaptionButton>
          </TitleSide>
        </TitleBar>
        <Frame>
          <MenuBar>
            <MenuIcon />
            {["File", "View", "Insert", "Charts", "Tools", "Window", "Help"].map(m => <MenuItem key={m}>{m}</MenuItem>)}
            <MdiButtons>
              <MdiButton aria-label="Minimize chart"><Ico w={8} h={8}><path d="M1 6.500h6" stroke="#7a8fa6" strokeWidth="1.500" /></Ico></MdiButton>
              <MdiButton aria-label="Restore chart"><Ico w={9} h={9}><path d="M3 3V1h5v4H6M1 4h5v4H1z" fill="none" stroke="#7a8fa6" strokeWidth="1.400" /></Ico></MdiButton>
              <MdiButton aria-label="Close chart"><Cross color="#7a8fa6" /></MdiButton>
            </MdiButtons>
          </MenuBar>
          <ToolBar>
            <Grip />
            <Tool aria-label="Market Watch"><MarketIcon /></Tool>
            <Tool aria-label="Favorites"><FavIcon /></Tool>
            <Tool aria-label="Navigator"><NavIcon /></Tool>
            <Tool aria-label="Tester"><TesterIcon /></Tool>
            <TextTool $w={88}><OrderIcon />New Order</TextTool>
            <Tool aria-label="MetaEditor"><GoldIcon /></Tool>
            <TextTool $w={100}><AutoIcon />AutoTrading</TextTool>
            <Divider />
            <Grip />
            {["M1", "M5", "M15", "M30", "H1", "H4", "D1", "W1"].map(t => <Tool key={t} $pressed={t === "M15"}>{t}</Tool>)}
            <Divider />
            <Grip />
            <Tool $pressed aria-label="Cursor"><CursorIcon /></Tool>
            <Tool aria-label="Crosshair"><CrossIcon /></Tool>
            <Tool aria-label="Trendline"><LineIcon /></Tool>
            <Tool aria-label="Channel"><ChannelIcon /></Tool>
            <Tool aria-label="Fibonacci"><FiboIcon /></Tool>
            <Tool aria-label="Text"><TextIcon /></Tool>
            <Tool aria-label="Text label"><LabelIcon /></Tool>
            <Tool aria-label="Vertical line"><VLineIcon /></Tool>
            <Tool aria-label="Rectangle"><RectIcon /></Tool>
            <Tool $drop aria-label="Arrows"><ArrowsIcon /><Caret /></Tool>
            <Divider />
            <Grip />
            <Tool aria-label="Bar chart"><BarsIcon /></Tool>
            <Tool $pressed aria-label="Candlesticks"><CandleIcon /></Tool>
            <Tool aria-label="Line chart"><CurveIcon /></Tool>
            <Divider $l={2} $r={2} />
            <Tool aria-label="Zoom in"><Lens plus /></Tool>
            <Tool aria-label="Zoom out"><Lens /></Tool>
            <Tool aria-label="Tile windows"><TileIcon /></Tool>
            <Divider $l={3} $r={3} />
            <Tool aria-label="Auto scroll"><ScrollIcon /></Tool>
            <Tool aria-label="Chart shift"><ShiftIcon /></Tool>
            <Divider $l={2} $r={3} />
            <Tool $drop aria-label="Indicators"><IndicatorIcon /><Caret /></Tool>
            <Tool $drop aria-label="Periods"><ClockIcon /><Caret /></Tool>
            <Tool $drop aria-label="Templates"><TemplateIcon /><Caret /></Tool>
            <Divider />
            <Spacer />
            <Tool aria-label="Search"><SearchIcon /></Tool>
            <Tool aria-label="Chat"><ChatIcon /></Tool>
          </ToolBar>
          <Workspace>
            <ChartRow>
              <Plot><Chart /></Plot>
              <PriceAxis>{prices.map(p => <Price key={p}>{p}</Price>)}</PriceAxis>
            </ChartRow>
            <DateAxis>{dates.map(d => <DateMark key={d}>{d}</DateMark>)}</DateAxis>
          </Workspace>
          <ChartTabs>
            {chartTabs.map((t, i) => <ChartTab key={i} $active={i === 9}>{t}</ChartTab>)}
            <TabScroll><Ico w={4} h={7}><path d="M4 0v7L0 3.500z" fill="#999" /></Ico><Ico w={4} h={7}><path d="M0 0v7l4-3.500z" fill="#777" /></Ico></TabScroll>
          </ChartTabs>
          <StatusBar>
            <StatusCell>For Help, press F1</StatusCell>
            {status.map(([w, t]) => <StatusCell key={t} $w={w}>{t}</StatusCell>)}
            <StatusCell $w={145}><TrafficIcon />3438/6 kb</StatusCell>
          </StatusBar>
        </Frame>

        <ListWindow aria-label="Indicators on BTCUSD,M15">
          <ListCaption><ListIcon /><WindowTitle>Indicators on BTCUSD,M15</WindowTitle></ListCaption>
          <ListClient>
            <Tree>
              <TreeRoot><ExpandIcon /><ChartIcon />Main chart</TreeRoot>
              <TreeList>
                {indicators.map((n, i) => <TreeItem key={n} $selected={i === 1}><FxIcon /><span>@NinjaForex {n}</span></TreeItem>)}
              </TreeList>
            </Tree>
          </ListClient>
        </ListWindow>

        <Dialog role="dialog" aria-label="Custom Indicator">
          <DialogCaption>
            <span />
            <WindowTitle>Custom Indicator - @NinjaForex Hierarki Zone Dealer</WindowTitle>
            <CaptionTools><HelpButton>?</HelpButton><CloseButton aria-label="Close"><Cross /></CloseButton></CaptionTools>
          </DialogCaption>
          <DialogClient>
            <TabStrip role="tablist">
              {dialogTabs.map(([t, w]) => <DialogTab key={t} role="tab" $w={w} $active={t === "Inputs"}>{t}</DialogTab>)}
            </TabStrip>
            <TabPage>
              <GridBox>
                <InputsTable>
                  <colgroup><col width="217" /><col /></colgroup>
                  <thead><tr><th>Variable</th><th>Value</th></tr></thead>
                  <tbody>
                    {inputs.map(([n, v]) => <tr key={n}><td><NameCell><AbIcon />{n}</NameCell></td><td>{v}</td></tr>)}
                  </tbody>
                </InputsTable>
                <ScrollBar>
                  <ScrollButton aria-label="Scroll up"><Ico w={8} h={6}><path d="M.7 5l3.300-3.500L7.300 5" fill="none" stroke="#505050" strokeWidth="1.800" /></Ico></ScrollButton>
                  <Thumb />
                  <ScrollButton aria-label="Scroll down"><Ico w={8} h={6}><path d="M.7 1l3.300 3.500L7.300 1" fill="none" stroke="#505050" strokeWidth="1.800" /></Ico></ScrollButton>
                </ScrollBar>
              </GridBox>
              <SideButtons><PushButton>Load</PushButton><PushButton>Save</PushButton></SideButtons>
            </TabPage>
            <DialogFooter><PushButton $default>OK</PushButton><PushButton>Cancel</PushButton><PushButton>Reset</PushButton></DialogFooter>
          </DialogClient>
          <SizeGrip />
        </Dialog>
      </Desktop>
    </>
  );
}
